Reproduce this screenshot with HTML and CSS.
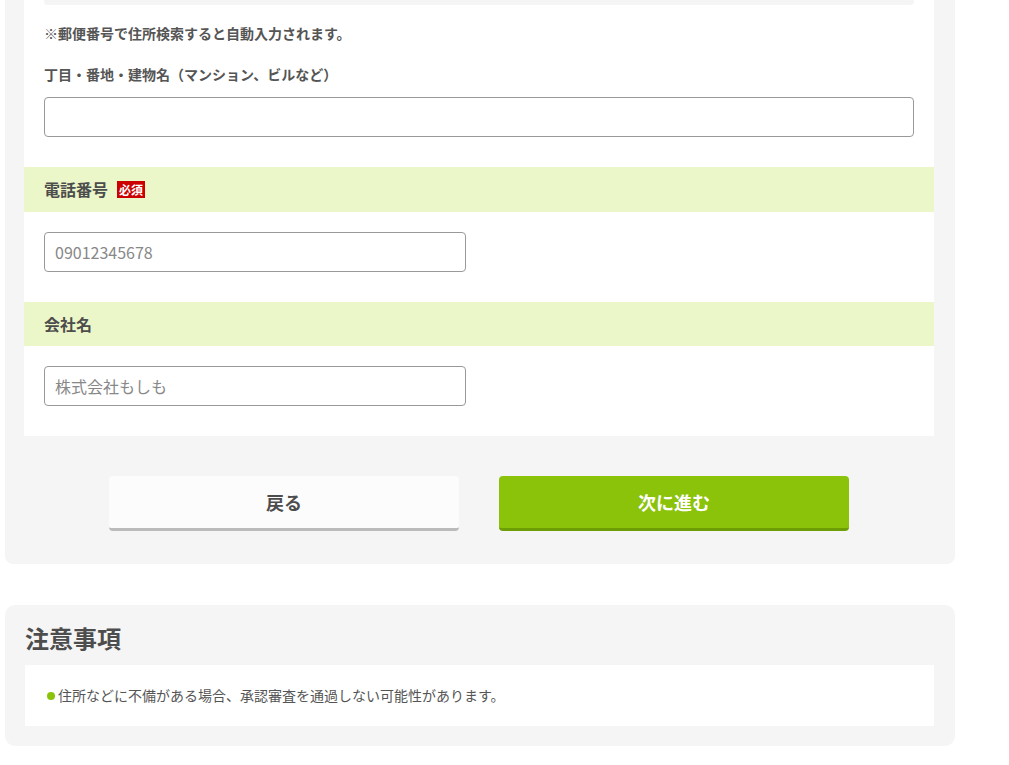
FILE: index.html
```html
<!DOCTYPE html>
<html lang="ja">
<head>
    <meta charset="UTF-8">
    <meta name="viewport" content="width=device-width, initial-scale=1.0">
    <title>お申し込み情報の入力</title>
    <link rel="stylesheet" href="styles.css">
</head>
<body>

<div class="page">
    <section class="panel panel-form">
        <div class="card">
            <div class="field-body field-first">
                <div class="readonly"></div>
                <p class="hint">※郵便番号で住所検索すると自動入力されます。</p>
                <label class="sub-label" for="address2">丁目・番地・建物名（マンション、ビルなど）</label>
                <input type="text" class="text-input" id="address2">
            </div>

            <div class="field-head">電話番号<span class="required">必須</span></div>
            <div class="field-body">
                <input type="text" class="text-input short" id="tel" placeholder="09012345678">
            </div>

            <div class="field-head">会社名</div>
            <div class="field-body">
                <input type="text" class="text-input short" id="company" placeholder="株式会社もしも">
            </div>
        </div>

        <div class="actions">
            <button type="button" class="btn btn-back">戻る</button>
            <button type="button" class="btn btn-next">次に進む</button>
        </div>
    </section>

    <section class="panel panel-notice">
        <h2>注意事項</h2>
        <div class="notice-box">
            <p><span class="dot"></span>住所などに不備がある場合、承認審査を通過しない可能性があります。</p>
        </div>
    </section>
</div>

</body>
</html>
```

FILE: styles.css
```css
body {
    margin: 0;
    font-family: "Noto Sans CJK JP", "Noto Sans", sans-serif;
    color: #555;
    background: #fff;
}
.page {
    width: 950px;
    padding-left: 5px;
}
.panel {
    background: #f5f5f5;
    padding: 0 21px 33px 19px;
}
.panel-form {
    margin-top: -55px;
    border-radius: 0 0 8px 8px;
}
.card {
    background: #fff;
}
.field-body {
    padding: 20px 20px 30px;
}
.readonly {
    height: 40px;
    background: #f5f5f5;
    border-radius: 4px;
}
.hint {
    margin: 18px 0 0;
    font-size: 14px;
    font-weight: bold;
    line-height: 20px;
}
.sub-label {
    display: block;
    margin-top: 21px;
    font-size: 14px;
    font-weight: bold;
    line-height: 20px;
}
.text-input {
    display: block;
    box-sizing: border-box;
    width: 100%;
    height: 40px;
    margin-top: 13px;
    padding: 0 10px;
    border: 1px solid #999;
    border-radius: 4px;
    font-family: inherit;
    font-size: 16px;
    color: #333;
}
.field-body .text-input:first-child {
    margin-top: 0;
}
.text-input.short {
    width: 422px;
}
.text-input::placeholder {
    color: #888;
}
.field-head {
    display: flex;
    align-items: center;
    gap: 9px;
    height: 44.5px;
    padding: 0 20px;
    background: #ebf7c9;
    font-size: 16px;
    font-weight: bold;
    color: #4d4d4d;
}
.required {
    display: inline-block;
    width: 28px;
    height: 17px;
    background: #c00;
    color: #fff;
    font-size: 12px;
    line-height: 17px;
    text-align: center;
    margin-top: 1px;
}
.actions {
    display: flex;
    justify-content: center;
    gap: 40px;
    padding-top: 40px;
}
.btn {
    width: 350px;
    height: 55px;
    border: none;
    border-bottom: 3px solid;
    border-radius: 4px;
    font-family: inherit;
    font-size: 18px;
    font-weight: bold;
    cursor: pointer;
}
.btn-back {
    background: #fcfcfc;
    border-bottom-color: #bbb;
    color: #4d4d4d;
}
.btn-next {
    background: #8bc20a;
    border-bottom-color: #6e9e06;
    color: #fff;
}
.btn-next:hover {
    background: #7db007;
}
.panel-notice {
    margin-top: 41px;
    padding: 18px 21px 20px 20px;
    border-radius: 10px;
}
.panel-notice h2 {
    margin: 0 0 12px;
    font-size: 24px;
    line-height: 30px;
    color: #4d4d4d;
}
.notice-box {
    background: #fff;
    padding: 20px 20px 20px 22px;
}
.notice-box p {
    margin: 0;
    font-size: 14px;
    line-height: 21px;
    display: flex;
    align-items: center;
}
.dot {
    width: 8px;
    height: 8px;
    border-radius: 50%;
    background: #8bc20a;
    margin-right: 3px;
}
```
